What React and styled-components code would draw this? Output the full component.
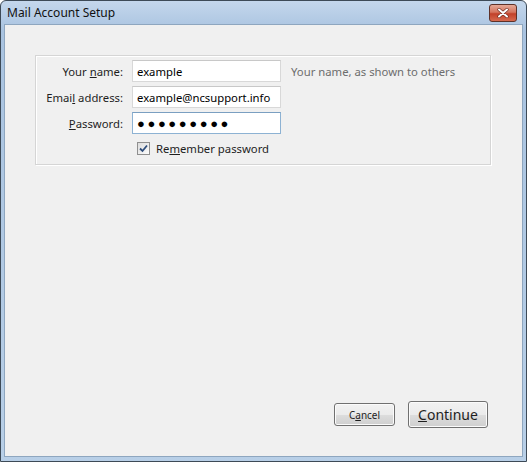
import React from 'react';
import styled, { createGlobalStyle } from 'styled-components';

const Global = createGlobalStyle`
  html, body {
    margin: 0;
    padding: 0;
    width: 527px;
    height: 462px;
    overflow: hidden;
  }
  body {
    font-family: "Noto Sans", "Open Sans", sans-serif;
    font-size: 11.3px;
    color: #1e1e1e;
  }
`;

const Window = styled.div`
  width: 527px;
  height: 462px;
  box-sizing: border-box;
  display: flex;
  flex-direction: column;
  border: 1px solid #3d4a57;
  border-radius: 6px 6px 0 0;
  background: linear-gradient(#c4d7ec, #a9c3e0 30px, #b8cfe7);
  padding: 0 3px 4px 3px;
`;

const TitleBar = styled.div`
  height: 23px;
  display: flex;
  align-items: center;
  justify-content: space-between;
  padding: 0 6px 0 3px;
`;

const Title = styled.span`
  font-size: 12px;
  color: #111;
`;

const CloseButton = styled.div`
  width: 28px;
  height: 18px;
  margin-top: 1px;
  box-sizing: border-box;
  border: 1px solid #5e3128;
  border-radius: 3px;
  background: linear-gradient(#e5a896, #d5755f 45%, #c2412a 55%, #d66a4f);
  display: flex;
  align-items: center;
  justify-content: center;
`;

const Body = styled.div`
  flex: 1;
  display: flex;
  flex-direction: column;
  background: #f0f0f0;
  border: 1px solid #8ea6bf;
  padding: 30px 31px 28px 30px;
`;

const GroupBox = styled.div`
  display: grid;
  grid-template-columns: 87px 149px auto;
  column-gap: 9px;
  row-gap: 4px;
  align-items: center;
  border: 1px solid #d5d5d5;
  box-shadow: inset 1px 1px 0 #fff, 1px 1px 0 #fff;
  padding: 4px 0 7px 0;
  height: 110px;
  box-sizing: border-box;
`;

const Label = styled.label`
  text-align: right;
  white-space: nowrap;
  color: #1e1e1e;
`;

const Input = styled.div`
  height: 22px;
  box-sizing: border-box;
  background: #fff;
  border: 1px solid ${(p) => (p.focused ? '#8db2d3' : '#d8d8d8')};
  border-top-color: ${(p) => (p.focused ? '#7a9fc1' : '#c8c8c8')};
  display: flex;
  align-items: center;
  padding: 0 4px;
  font-size: ${(p) => (p.dots ? '13px' : '11.3px')};
  letter-spacing: ${(p) => (p.dots ? '2.6px' : '0')};
  color: #000;
  white-space: nowrap;
  overflow: hidden;
`;

const Hint = styled.span`
  color: #6d6d6d;
  padding-left: 1px;
  white-space: nowrap;
`;

const CheckRow = styled.div`
  grid-column: 2 / 4;
  display: flex;
  align-items: center;
  gap: 6px;
  padding-left: 5px;
  height: 20px;
`;

const Checkbox = styled.span`
  width: 13px;
  height: 13px;
  box-sizing: border-box;
  border: 1px solid #8f8f8f;
  background: linear-gradient(135deg, #dcdcdc, #fcfcfc);
  display: flex;
  align-items: center;
  justify-content: center;
`;

const Spacer = styled.div`
  flex: 1;
`;

const ButtonRow = styled.div`
  display: flex;
  justify-content: flex-end;
  align-items: center;
  gap: 13px;
  padding-right: 3px;
`;

const Button = styled.button`
  font-family: "Noto Sans", "Open Sans", sans-serif;
  box-sizing: border-box;
  width: ${(p) => (p.big ? '80px' : '61px')};
  height: ${(p) => (p.big ? '27px' : '23px')};
  font-size: ${(p) => (p.big ? '14px' : '10px')};
  color: #1e1e1e;
  border: 1px solid #707070;
  border-radius: 3px;
  background: linear-gradient(#f2f2f2, #ebebeb 50%, #dddddd 51%, #cfcfcf);
  box-shadow: inset 0 0 0 1px #fbfbfb;
  padding: 0;
`;

const U = styled.span`
  text-decoration: underline;
`;

function App() {
  return (
    <>
      <Global />
      <Window>
        <TitleBar>
          <Title>Mail Account Setup</Title>
          <CloseButton>
            <svg width="14" height="10" viewBox="0 0 14 10">
              <path d="M3 1.5 L11 8.5 M11 1.5 L3 8.5" stroke="#6b2a1f" strokeWidth="3.2" strokeLinecap="round" />
              <path d="M3 1.5 L11 8.5 M11 1.5 L3 8.5" stroke="#fff" strokeWidth="2" strokeLinecap="round" />
            </svg>
          </CloseButton>
        </TitleBar>
        <Body>
          <GroupBox>
            <Label>Your <U>n</U>ame:</Label>
            <Input>example</Input>
            <Hint>Your name, as shown to others</Hint>

            <Label>Emai<U>l</U> address:</Label>
            <Input>example@ncsupport.info</Input>
            <span />

            <Label><U>P</U>assword:</Label>
            <Input focused dots>●●●●●●●●●</Input>
            <span />

            <span />
            <CheckRow>
              <Checkbox>
                <svg width="9" height="9" viewBox="0 0 9 9">
                  <path d="M1 4.5 L3.5 7 L8 1.5" stroke="#2e4d7b" strokeWidth="1.8" fill="none" />
                </svg>
              </Checkbox>
              <span>Re<U>m</U>ember password</span>
            </CheckRow>
          </GroupBox>
          <Spacer />
          <ButtonRow>
            <Button>C<U>a</U>ncel</Button>
            <Button big><U>C</U>ontinue</Button>
          </ButtonRow>
        </Body>
      </Window>
    </>
  );
}

export default App;
